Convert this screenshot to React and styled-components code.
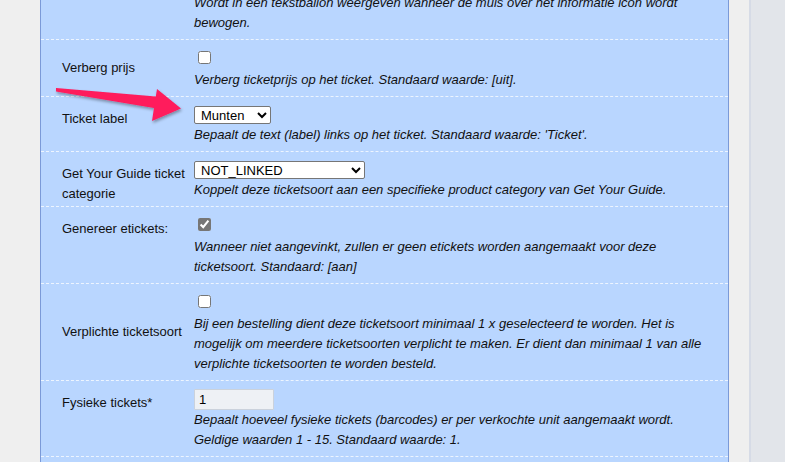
import React from 'react'
import styled, { createGlobalStyle } from 'styled-components'

const GlobalStyle = createGlobalStyle`
  html, body {
    margin: 0;
    padding: 0;
    height: 100%;
    overflow: hidden;
  }
  body {
    font-family: "Liberation Sans", Arial, sans-serif;
    font-size: 13px;
    color: #111;
  }
`;

const Page = styled.div`
  display: flex;
  height: 100vh;
`;

const Main = styled.div`
  position: relative;
  flex: 0 0 749px;
  background: #efefef;
  overflow: hidden;
`;

const Side = styled.div`
  flex: 1;
  background: #e2e5ea;
  border-left: 2px solid #d6dbe6;
`;

const Panel = styled.div`
  margin: -36px 0 0 40px;
  width: 687px;
  background: #b9d6ff;
  border-left: 1px solid #7b9ad8;
  border-right: 1px solid #7b9ad8;
`;

const Row = styled.div`
  display: grid;
  grid-template-columns: 132px 518px;
  padding-left: 21px;
  border-bottom: 1px dashed rgba(255, 255, 255, 0.75);
`;

const Label = styled.div`
  line-height: 20px;
  color: #111;
  padding-right: 4px;
  align-self: ${(p) => (p.$middle ? 'center' : 'start')};
  padding-top: ${(p) => (p.$middle ? '0' : '12px')};
`;

const Value = styled.div`
  padding: 8px 0 6px;
`;

const Help = styled.div`
  font-style: italic;
  line-height: 20px;
  color: #111;
`;

const Check = styled.input.attrs({ type: 'checkbox' })`
  display: block;
  width: 13px;
  height: 13px;
  margin: 3px 0 6px 4px;
  accent-color: #767676;
`;

const Select = styled.select`
  display: block;
  width: ${(p) => p.$width}px;
  height: 18px;
  margin: 1px 0 1px;
  padding: 0 0 0 2px;
  font-family: "Liberation Sans", Arial, sans-serif;
  font-size: 13px;
  color: #000;
  background: #fff;
  border: 1px solid #767676;
  border-radius: 2px;
`;

const TextInput = styled.input`
  display: block;
  box-sizing: border-box;
  width: 80px;
  height: 21px;
  margin: 0;
  padding: 0 4px;
  font-family: "Liberation Sans", Arial, sans-serif;
  font-size: 13px;
  color: #000;
  background: #eef1f5;
  border: 1px solid #cbd2dc;
  border-radius: 1px;
  outline: none;
`;

const Arrow = styled.svg`
  position: absolute;
  left: 0;
  top: 0;
  pointer-events: none;
`;

export default function App() {
  return (
    <>
      <GlobalStyle />
      <Page>
        <Main>
          <Panel>
            <Row>
              <Label />
              <Value>
                <TextInput defaultValue="" readOnly />
                <Help>
                  Wordt in een tekstballon weergeven wanneer de muis over het informatie icon wordt
                  bewogen.
                </Help>
              </Value>
            </Row>

            <Row>
              <Label $middle>Verberg prijs</Label>
              <Value>
                <Check />
                <Help>Verberg ticketprijs op het ticket. Standaard waarde: [uit].</Help>
              </Value>
            </Row>

            <Row>
              <Label>Ticket label</Label>
              <Value>
                <Select $width={77} defaultValue="Munten">
                  <option>Ticket</option>
                  <option>Munten</option>
                </Select>
                <Help>Bepaalt de text (label) links op het ticket. Standaard waarde: 'Ticket'.</Help>
              </Value>
            </Row>

            <Row>
              <Label>Get Your Guide ticket categorie</Label>
              <Value>
                <Select $width={171} defaultValue="NOT_LINKED">
                  <option>NOT_LINKED</option>
                </Select>
                <Help>Koppelt deze ticketsoort aan een specifieke product category van Get Your Guide.</Help>
              </Value>
            </Row>

            <Row>
              <Label>Genereer etickets:</Label>
              <Value>
                <Check defaultChecked />
                <Help>
                  Wanneer niet aangevinkt, zullen er geen etickets worden aangemaakt voor deze
                  ticketsoort. Standaard: [aan]
                </Help>
              </Value>
            </Row>

            <Row>
              <Label $middle>Verplichte ticketsoort</Label>
              <Value>
                <Check />
                <Help>
                  Bij een bestelling dient deze ticketsoort minimaal 1 x geselecteerd te worden. Het is
                  mogelijk om meerdere ticketsoorten verplicht te maken. Er dient dan minimaal 1 van alle
                  verplichte ticketsoorten te worden besteld.
                </Help>
              </Value>
            </Row>

            <Row>
              <Label>Fysieke tickets*</Label>
              <Value>
                <TextInput defaultValue="1" />
                <Help>
                  Bepaalt hoeveel fysieke tickets (barcodes) er per verkochte unit aangemaakt wordt.
                  Geldige waarden 1 - 15. Standaard waarde: 1.
                </Help>
              </Value>
            </Row>

            <Row>
              <Label />
              <Value>
                <Help>&nbsp;</Help>
              </Value>
            </Row>
          </Panel>

          <Arrow width="200" height="140" viewBox="0 0 200 140">
            <defs>
              <filter id="shadow" x="-20%" y="-40%" width="140%" height="180%">
                <feDropShadow dx="1" dy="2" stdDeviation="1.6" floodColor="#000" floodOpacity="0.35" />
              </filter>
            </defs>
            <polygon
              points="56,88 155.8,96.5 157,89 181,108.5 152,121 154,108 56,91.5"
              fill="#ff1a5c"
              strokeLinejoin="round"
              filter="url(#shadow)"
            />
          </Arrow>
        </Main>
        <Side />
      </Page>
    </>
  )
}
